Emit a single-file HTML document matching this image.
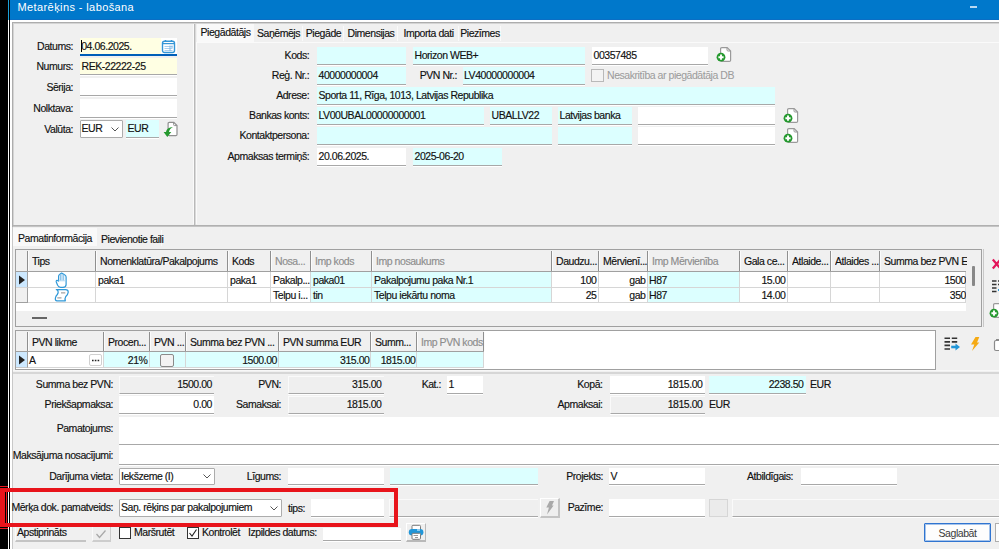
<!DOCTYPE html><html><head><meta charset="utf-8"><style>
html,body{margin:0;padding:0}
body{width:999px;height:549px;overflow:hidden;position:relative;background:#f0f0f0;font-family:"Liberation Sans",sans-serif}
.a{position:absolute}
.t{position:absolute;font-size:10.5px;line-height:12px;letter-spacing:-0.45px;white-space:nowrap;color:#111;-webkit-text-stroke:0.15px}
svg{overflow:visible}
</style></head><body>
<div class="a" style="left:0px;top:0px;width:8px;height:549px;background:#000"></div>
<div class="a" style="left:8px;top:0px;width:1px;height:20px;background:#1aa0d8"></div>
<div class="a" style="left:8px;top:20px;width:1px;height:529px;background:#fff"></div>
<div class="a" style="left:9px;top:0px;width:1px;height:549px;background:#000"></div>
<div class="a" style="left:10px;top:0px;width:989px;height:20px;background:#0078cb"></div>
<div class="t" style="left:17.5px;top:1.13px;font-size:11px;color:#fff;letter-spacing:0.4px;-webkit-text-stroke:0">Metarēķins - labošana</div>
<div class="a" style="left:970px;top:6px;width:7px;height:2px;background:#b9d9f2"></div>
<div class="a" style="left:10px;top:19px;width:989px;height:1px;background:#0a6ec4"></div>
<div class="a" style="left:10px;top:20px;width:989px;height:2px;background:#fff"></div>
<div class="a" style="left:10px;top:22px;width:2px;height:527px;background:#fff"></div>
<div class="a" style="left:12px;top:22px;width:987px;height:1px;background:#adadad"></div>
<div class="a" style="left:12px;top:22px;width:1px;height:205px;background:#adadad"></div>
<div class="a" style="left:13px;top:23px;width:986px;height:1px;background:#d4d4d4"></div>
<div class="a" style="left:13px;top:23px;width:1px;height:202px;background:#d4d4d4"></div>
<div class="a" style="left:12px;top:227px;width:1px;height:322px;background:#c8c8c8"></div>
<div class="a" style="left:193px;top:24px;width:1px;height:200px;background:#fafafa"></div>
<div class="a" style="left:194px;top:24px;width:1px;height:202px;background:#b9b9b9"></div>
<div class="a" style="left:195px;top:24px;width:1px;height:202px;background:#dadada"></div>
<div class="t" style="right:926px;top:40.33px;">Datums:</div>
<div class="t" style="right:926px;top:60.13px;">Numurs:</div>
<div class="t" style="right:926px;top:81.13px;">Sērija:</div>
<div class="t" style="right:926px;top:101.93px;">Nolktava:</div>
<div class="t" style="right:926px;top:122.93px;">Valūta:</div>
<div class="a" style="left:80px;top:38px;width:97px;height:18px;background:#ffffe3;border-bottom:2px solid #005fb8;box-sizing:border-box"></div>
<div class="a" style="left:161px;top:38px;width:16px;height:16px;background:#fff"></div>
<div class="t" style="left:81.2px;top:40.33px;">04.06.2025.</div>
<div class="a" style="left:81px;top:40px;width:1px;height:12px;background:#000"></div>
<svg class="a" style="left:161px;top:39px" width="15" height="15" viewBox="0 0 15 15">
<rect x="1.5" y="2.2" width="12" height="11.3" rx="2" fill="#fff" stroke="#3596d6" stroke-width="1.4"/>
<path d="M1.8 4.6 H13.2" stroke="#3596d6" stroke-width="1.2"/>
<path d="M4.5 1 V2.6 M10.5 1 V2.6" stroke="#3596d6" stroke-width="1.4"/>
<path d="M3.5 7.5 H11.5 M3.5 9.5 H11.5 M3.5 11.5 H11.5" stroke="#a9cfee" stroke-width="1.1"/>
<path d="M9 6.5 V12 M11 6.5 V9" stroke="#7fb8e6" stroke-width="1"/>
</svg>
<div class="a" style="left:80px;top:58px;width:97px;height:17px;background:#ffffe3;border-bottom:1px solid #a8a8a8;box-sizing:border-box;box-shadow:0 1px 0 #fff;"></div>
<div class="t" style="left:81.5px;top:60.13px;">REK-22222-25</div>
<div class="a" style="left:80px;top:78px;width:97px;height:17.5px;background:#fff;border-bottom:1px solid #a8a8a8;box-sizing:border-box;box-shadow:0 1px 0 #fff;"></div>
<div class="a" style="left:80px;top:99px;width:97px;height:19px;background:#fff;border-bottom:1px solid #a8a8a8;box-sizing:border-box;box-shadow:0 1px 0 #fff;"></div>
<div class="a" style="left:79.5px;top:119.5px;width:43.0px;height:18.0px;background:#fff;border:1px solid #acacac;box-sizing:border-box;border-radius:1px"></div>
<div class="t" style="left:81.5px;top:122.03px;">EUR</div>
<svg class="a" style="left:109.5px;top:124.5px" width="10" height="8"><path d="M1.5 2.5 L5 6 L8.5 2.5" fill="none" stroke="#555" stroke-width="1"/></svg>
<div class="a" style="left:126px;top:120px;width:33px;height:18px;background:#dcffff;border-bottom:1px solid #a8a8a8;box-sizing:border-box;box-shadow:0 1px 0 #fff;"></div>
<div class="t" style="left:127.5px;top:122.03px;">EUR</div>
<svg class="a" style="left:163px;top:121px" width="16" height="17" viewBox="0 0 16 17">
<path d="M6.3 1.4 H10.8 L14 4.6 V13.4 Q14 14.6 12.8 14.6 H6.3 Q5.1 14.6 5.1 13.4 V2.6 Q5.1 1.4 6.3 1.4 Z" fill="#fff" stroke="#8f8f8f" stroke-width="1.2"/>
<path d="M10.6 1.6 V3.6 Q10.6 4.6 11.6 4.6 H13.8" fill="none" stroke="#8f8f8f" stroke-width="1"/>
<path d="M10 6 Q6.5 7.5 6 11 H8.3 L4.3 16 L0.6 11 H3 Q3.5 6.5 10 6 Z" fill="#25992f"/></svg>
<div class="a" style="left:196px;top:24px;width:803px;height:18px;background:#f0f0f0"></div>
<div class="a" style="left:197px;top:24px;width:57px;height:19px;background:#f9f9f9"></div>
<div class="a" style="left:254px;top:26px;width:49px;height:15px;background:#f0f0f0;border-right:1px solid #fafafa;box-sizing:border-box"></div>
<div class="t" style="left:178.5px;width:200px;text-align:center;top:26.53px;">Saņēmējs</div>
<div class="a" style="left:303px;top:26px;width:41px;height:15px;background:#f0f0f0;border-right:1px solid #fafafa;box-sizing:border-box"></div>
<div class="t" style="left:223.5px;width:200px;text-align:center;top:26.53px;">Piegāde</div>
<div class="a" style="left:344px;top:26px;width:54px;height:15px;background:#f0f0f0;border-right:1px solid #fafafa;box-sizing:border-box"></div>
<div class="t" style="left:271.0px;width:200px;text-align:center;top:26.53px;">Dimensijas</div>
<div class="a" style="left:398px;top:26px;width:61px;height:15px;background:#f0f0f0;border-right:1px solid #fafafa;box-sizing:border-box"></div>
<div class="t" style="left:328.5px;width:200px;text-align:center;top:26.53px;">Importa dati</div>
<div class="a" style="left:459px;top:26px;width:42px;height:15px;background:#f0f0f0;border-right:1px solid #fafafa;box-sizing:border-box"></div>
<div class="t" style="left:380.0px;width:200px;text-align:center;top:26.53px;">Piezīmes</div>
<div class="t" style="left:125.5px;width:200px;text-align:center;top:26.03px;">Piegādātājs</div>
<div class="a" style="left:196px;top:42px;width:803px;height:182px;background:#f0f0f0;border-top:1px solid #fafafa;border-left:1px solid #fafafa;box-sizing:border-box"></div>
<div class="t" style="right:689.8px;top:49.03px;">Kods:</div>
<div class="t" style="right:689.8px;top:69.03px;">Reģ. Nr.:</div>
<div class="t" style="right:689.8px;top:89.03px;">Adrese:</div>
<div class="t" style="right:689.8px;top:109.03px;">Bankas konts:</div>
<div class="t" style="right:689.8px;top:129.03px;">Kontaktpersona:</div>
<div class="t" style="right:689.8px;top:149.53px;">Apmaksas termiņš:</div>
<div class="a" style="left:317px;top:47px;width:88.5px;height:18px;background:#dcffff;border-bottom:1px solid #a8a8a8;box-sizing:border-box;box-shadow:0 1px 0 #fff;"></div>
<div class="a" style="left:413px;top:47px;width:172px;height:18px;background:#dcffff;border-bottom:1px solid #a8a8a8;box-sizing:border-box;box-shadow:0 1px 0 #fff;"></div>
<div class="t" style="left:414.5px;top:49.03px;">Horizon WEB+</div>
<div class="a" style="left:592px;top:47px;width:115.5px;height:18px;background:#fff;border-bottom:1px solid #a8a8a8;box-sizing:border-box;box-shadow:0 1px 0 #fff;"></div>
<div class="t" style="left:593.5px;top:49.03px;">00357485</div>
<svg class="a" style="left:716px;top:46px" width="16" height="17" viewBox="0 0 16 17">
<path d="M5.8 1.6 H11.2 L14.6 5 V14.2 Q14.6 15.4 13.4 15.4 H5.8 Q4.6 15.4 4.6 14.2 V2.8 Q4.6 1.6 5.8 1.6 Z" fill="#fff" stroke="#9a9a9a" stroke-width="1.2"/>
<path d="M11 1.8 V4 Q11 5 12 5 H14.4" fill="none" stroke="#9a9a9a" stroke-width="1"/>
<circle cx="5" cy="11.2" r="4.4" fill="#25992f"/>
<path d="M5 8.6 V13.8 M2.4 11.2 H7.6" stroke="#fff" stroke-width="1.9"/></svg>
<div class="a" style="left:317px;top:67px;width:88.5px;height:18px;background:#dcffff;border-bottom:1px solid #a8a8a8;box-sizing:border-box;box-shadow:0 1px 0 #fff;"></div>
<div class="t" style="left:318.5px;top:69.03px;">40000000004</div>
<div class="t" style="right:542px;top:69.03px;">PVN Nr.:</div>
<div class="a" style="left:462.5px;top:67px;width:122.5px;height:18px;background:#dcffff;border-bottom:1px solid #a8a8a8;box-sizing:border-box;box-shadow:0 1px 0 #fff;"></div>
<div class="t" style="left:464.0px;top:69.03px;">LV40000000004</div>
<div class="a" style="left:591px;top:69px;width:13px;height:13px;background:#f3f3f3;border:1px solid #b9b9b9;box-sizing:border-box"></div>
<div class="t" style="left:607px;top:69.03px;color:#9c9c9c;-webkit-text-stroke:0.05px">Nesakritība ar piegādātāja DB</div>
<div class="a" style="left:317px;top:87px;width:458px;height:18px;background:#dcffff;border-bottom:1px solid #a8a8a8;box-sizing:border-box;box-shadow:0 1px 0 #fff;"></div>
<div class="t" style="left:318.5px;top:89.03px;">Sporta 11, Rīga, 1013, Latvijas Republika</div>
<div class="a" style="left:317px;top:107px;width:166.5px;height:18px;background:#dcffff;border-bottom:1px solid #a8a8a8;box-sizing:border-box;box-shadow:0 1px 0 #fff;"></div>
<div class="t" style="left:318.5px;top:109.03px;">LV00UBAL00000000001</div>
<div class="a" style="left:490px;top:107px;width:62px;height:18px;background:#dcffff;border-bottom:1px solid #a8a8a8;box-sizing:border-box;box-shadow:0 1px 0 #fff;"></div>
<div class="t" style="left:491.5px;top:109.03px;">UBALLV22</div>
<div class="a" style="left:558px;top:107px;width:74px;height:18px;background:#dcffff;border-bottom:1px solid #a8a8a8;box-sizing:border-box;box-shadow:0 1px 0 #fff;"></div>
<div class="t" style="left:559.5px;top:109.03px;">Latvijas banka</div>
<div class="a" style="left:638px;top:107px;width:137px;height:18px;background:#fff;border-bottom:1px solid #a8a8a8;box-sizing:border-box;box-shadow:0 1px 0 #fff;"></div>
<svg class="a" style="left:783px;top:107px" width="16" height="17" viewBox="0 0 16 17">
<path d="M5.8 1.6 H11.2 L14.6 5 V14.2 Q14.6 15.4 13.4 15.4 H5.8 Q4.6 15.4 4.6 14.2 V2.8 Q4.6 1.6 5.8 1.6 Z" fill="#fff" stroke="#9a9a9a" stroke-width="1.2"/>
<path d="M11 1.8 V4 Q11 5 12 5 H14.4" fill="none" stroke="#9a9a9a" stroke-width="1"/>
<circle cx="5" cy="11.2" r="4.4" fill="#25992f"/>
<path d="M5 8.6 V13.8 M2.4 11.2 H7.6" stroke="#fff" stroke-width="1.9"/></svg>
<div class="a" style="left:317px;top:127px;width:235px;height:18px;background:#dcffff;border-bottom:1px solid #a8a8a8;box-sizing:border-box;box-shadow:0 1px 0 #fff;"></div>
<div class="a" style="left:558px;top:127px;width:74px;height:18px;background:#dcffff;border-bottom:1px solid #a8a8a8;box-sizing:border-box;box-shadow:0 1px 0 #fff;"></div>
<div class="a" style="left:638px;top:127px;width:137px;height:18px;background:#fff;border-bottom:1px solid #a8a8a8;box-sizing:border-box;box-shadow:0 1px 0 #fff;"></div>
<svg class="a" style="left:783px;top:127px" width="16" height="17" viewBox="0 0 16 17">
<path d="M5.8 1.6 H11.2 L14.6 5 V14.2 Q14.6 15.4 13.4 15.4 H5.8 Q4.6 15.4 4.6 14.2 V2.8 Q4.6 1.6 5.8 1.6 Z" fill="#fff" stroke="#9a9a9a" stroke-width="1.2"/>
<path d="M11 1.8 V4 Q11 5 12 5 H14.4" fill="none" stroke="#9a9a9a" stroke-width="1"/>
<circle cx="5" cy="11.2" r="4.4" fill="#25992f"/>
<path d="M5 8.6 V13.8 M2.4 11.2 H7.6" stroke="#fff" stroke-width="1.9"/></svg>
<div class="a" style="left:317px;top:147.5px;width:88.5px;height:18.0px;background:#fff;border-bottom:1px solid #a8a8a8;box-sizing:border-box;box-shadow:0 1px 0 #fff;"></div>
<div class="t" style="left:318.5px;top:149.53px;">20.06.2025.</div>
<div class="a" style="left:413px;top:147.5px;width:89px;height:18.0px;background:#dcffff;border-bottom:1px solid #a8a8a8;box-sizing:border-box;box-shadow:0 1px 0 #fff;"></div>
<div class="t" style="left:414.5px;top:149.53px;">2025-06-20</div>
<div class="a" style="left:13px;top:225px;width:986px;height:1px;background:#b0b0b0"></div>
<div class="a" style="left:13px;top:226px;width:986px;height:1px;background:#c4c4c4"></div>
<div class="a" style="left:13px;top:228px;width:84px;height:18px;background:#f9f9f9"></div>
<div class="t" style="left:18px;top:231.53px;">Pamatinformācija</div>
<div class="a" style="left:97px;top:230px;width:65px;height:16px;background:#f0f0f0;border-right:1px solid #fafafa;box-sizing:border-box"></div>
<div class="t" style="left:101px;top:232.53px;">Pievienotie faili</div>
<div class="a" style="left:15px;top:249px;width:967px;height:78px;background:#f0f0f0;border:1px solid #a0a0a0;box-sizing:border-box"></div>
<div class="a" style="left:16px;top:250px;width:950px;height:61px;background:#fff"></div>
<div class="a" style="left:16px;top:250px;width:950px;height:22px;background:#f0f0f0;border-bottom:1px solid #a0a0a0;box-sizing:border-box"></div>
<div class="a" style="left:27px;top:251px;width:1px;height:20px;background:#8f8f8f"></div>
<div class="a" style="left:28px;top:251px;width:1px;height:20px;background:#fbfbfb"></div>
<div class="a" style="left:95px;top:251px;width:1px;height:20px;background:#8f8f8f"></div>
<div class="a" style="left:96px;top:251px;width:1px;height:20px;background:#fbfbfb"></div>
<div class="t" style="left:32px;top:255.03px;width:64px;overflow:hidden">Tips</div>
<div class="a" style="left:227px;top:251px;width:1px;height:20px;background:#8f8f8f"></div>
<div class="a" style="left:228px;top:251px;width:1px;height:20px;background:#fbfbfb"></div>
<div class="t" style="left:100px;top:255.03px;width:128px;overflow:hidden">Nomenklatūra/Pakalpojums</div>
<div class="a" style="left:270px;top:251px;width:1px;height:20px;background:#8f8f8f"></div>
<div class="a" style="left:271px;top:251px;width:1px;height:20px;background:#fbfbfb"></div>
<div class="t" style="left:232px;top:255.03px;width:39px;overflow:hidden">Kods</div>
<div class="a" style="left:310px;top:251px;width:1px;height:20px;background:#8f8f8f"></div>
<div class="a" style="left:311px;top:251px;width:1px;height:20px;background:#fbfbfb"></div>
<div class="t" style="left:275px;top:255.03px;color:#8d8d8d;width:36px;overflow:hidden">Nosa...</div>
<div class="a" style="left:371px;top:251px;width:1px;height:20px;background:#8f8f8f"></div>
<div class="a" style="left:372px;top:251px;width:1px;height:20px;background:#fbfbfb"></div>
<div class="t" style="left:315px;top:255.03px;color:#8d8d8d;width:57px;overflow:hidden">Imp kods</div>
<div class="a" style="left:551px;top:251px;width:1px;height:20px;background:#8f8f8f"></div>
<div class="a" style="left:552px;top:251px;width:1px;height:20px;background:#fbfbfb"></div>
<div class="t" style="left:376px;top:255.03px;color:#8d8d8d;width:176px;overflow:hidden">Imp nosaukums</div>
<div class="a" style="left:598px;top:251px;width:1px;height:20px;background:#8f8f8f"></div>
<div class="a" style="left:599px;top:251px;width:1px;height:20px;background:#fbfbfb"></div>
<div class="t" style="left:556px;top:255.03px;width:43px;overflow:hidden">Daudzu...</div>
<div class="a" style="left:647px;top:251px;width:1px;height:20px;background:#8f8f8f"></div>
<div class="a" style="left:648px;top:251px;width:1px;height:20px;background:#fbfbfb"></div>
<div class="t" style="left:603px;top:255.03px;width:45px;overflow:hidden">Mērvienī...</div>
<div class="a" style="left:739px;top:251px;width:1px;height:20px;background:#8f8f8f"></div>
<div class="a" style="left:740px;top:251px;width:1px;height:20px;background:#fbfbfb"></div>
<div class="t" style="left:652px;top:255.03px;color:#8d8d8d;width:88px;overflow:hidden">Imp Mērvienība</div>
<div class="a" style="left:787px;top:251px;width:1px;height:20px;background:#8f8f8f"></div>
<div class="a" style="left:788px;top:251px;width:1px;height:20px;background:#fbfbfb"></div>
<div class="t" style="left:744px;top:255.03px;width:44px;overflow:hidden">Gala ce...</div>
<div class="a" style="left:830px;top:251px;width:1px;height:20px;background:#8f8f8f"></div>
<div class="a" style="left:831px;top:251px;width:1px;height:20px;background:#fbfbfb"></div>
<div class="t" style="left:792px;top:255.03px;width:39px;overflow:hidden">Atlaide...</div>
<div class="a" style="left:879px;top:251px;width:1px;height:20px;background:#8f8f8f"></div>
<div class="a" style="left:880px;top:251px;width:1px;height:20px;background:#fbfbfb"></div>
<div class="t" style="left:835px;top:255.03px;width:45px;overflow:hidden">Atlaides ...</div>
<div class="t" style="left:884px;top:255.03px;width:83px;overflow:hidden">Summa bez PVN EUR</div>
<div class="a" style="left:28px;top:272px;width:68px;height:16px;background:#fff;border-right:1px solid #d6d6d6;border-bottom:1px solid #d6d6d6;box-sizing:border-box"></div>
<div class="a" style="left:96px;top:272px;width:132px;height:16px;background:#fff;border-right:1px solid #d6d6d6;border-bottom:1px solid #d6d6d6;box-sizing:border-box"></div>
<div class="a" style="left:228px;top:272px;width:43px;height:16px;background:#fff;border-right:1px solid #d6d6d6;border-bottom:1px solid #d6d6d6;box-sizing:border-box"></div>
<div class="a" style="left:271px;top:272px;width:40px;height:16px;background:#fff;border-right:1px solid #d6d6d6;border-bottom:1px solid #d6d6d6;box-sizing:border-box"></div>
<div class="a" style="left:311px;top:272px;width:61px;height:16px;background:#dcffff;border-right:1px solid #d6d6d6;border-bottom:1px solid #d6d6d6;box-sizing:border-box"></div>
<div class="a" style="left:372px;top:272px;width:180px;height:16px;background:#dcffff;border-right:1px solid #d6d6d6;border-bottom:1px solid #d6d6d6;box-sizing:border-box"></div>
<div class="a" style="left:552px;top:272px;width:47px;height:16px;background:#fff;border-right:1px solid #d6d6d6;border-bottom:1px solid #d6d6d6;box-sizing:border-box"></div>
<div class="a" style="left:599px;top:272px;width:49px;height:16px;background:#fff;border-right:1px solid #d6d6d6;border-bottom:1px solid #d6d6d6;box-sizing:border-box"></div>
<div class="a" style="left:648px;top:272px;width:92px;height:16px;background:#dcffff;border-right:1px solid #d6d6d6;border-bottom:1px solid #d6d6d6;box-sizing:border-box"></div>
<div class="a" style="left:740px;top:272px;width:48px;height:16px;background:#fff;border-right:1px solid #d6d6d6;border-bottom:1px solid #d6d6d6;box-sizing:border-box"></div>
<div class="a" style="left:788px;top:272px;width:43px;height:16px;background:#fff;border-right:1px solid #d6d6d6;border-bottom:1px solid #d6d6d6;box-sizing:border-box"></div>
<div class="a" style="left:831px;top:272px;width:49px;height:16px;background:#fff;border-right:1px solid #d6d6d6;border-bottom:1px solid #d6d6d6;box-sizing:border-box"></div>
<div class="a" style="left:880px;top:272px;width:86px;height:16px;background:#fff;border-right:1px solid #d6d6d6;border-bottom:1px solid #d6d6d6;box-sizing:border-box"></div>
<div class="a" style="left:28px;top:288px;width:68px;height:15px;background:#fff;border-right:1px solid #d6d6d6;border-bottom:1px solid #d6d6d6;box-sizing:border-box"></div>
<div class="a" style="left:96px;top:288px;width:132px;height:15px;background:#fff;border-right:1px solid #d6d6d6;border-bottom:1px solid #d6d6d6;box-sizing:border-box"></div>
<div class="a" style="left:228px;top:288px;width:43px;height:15px;background:#fff;border-right:1px solid #d6d6d6;border-bottom:1px solid #d6d6d6;box-sizing:border-box"></div>
<div class="a" style="left:271px;top:288px;width:40px;height:15px;background:#fff;border-right:1px solid #d6d6d6;border-bottom:1px solid #d6d6d6;box-sizing:border-box"></div>
<div class="a" style="left:311px;top:288px;width:61px;height:15px;background:#dcffff;border-right:1px solid #d6d6d6;border-bottom:1px solid #d6d6d6;box-sizing:border-box"></div>
<div class="a" style="left:372px;top:288px;width:180px;height:15px;background:#dcffff;border-right:1px solid #d6d6d6;border-bottom:1px solid #d6d6d6;box-sizing:border-box"></div>
<div class="a" style="left:552px;top:288px;width:47px;height:15px;background:#fff;border-right:1px solid #d6d6d6;border-bottom:1px solid #d6d6d6;box-sizing:border-box"></div>
<div class="a" style="left:599px;top:288px;width:49px;height:15px;background:#fff;border-right:1px solid #d6d6d6;border-bottom:1px solid #d6d6d6;box-sizing:border-box"></div>
<div class="a" style="left:648px;top:288px;width:92px;height:15px;background:#dcffff;border-right:1px solid #d6d6d6;border-bottom:1px solid #d6d6d6;box-sizing:border-box"></div>
<div class="a" style="left:740px;top:288px;width:48px;height:15px;background:#fff;border-right:1px solid #d6d6d6;border-bottom:1px solid #d6d6d6;box-sizing:border-box"></div>
<div class="a" style="left:788px;top:288px;width:43px;height:15px;background:#fff;border-right:1px solid #d6d6d6;border-bottom:1px solid #d6d6d6;box-sizing:border-box"></div>
<div class="a" style="left:831px;top:288px;width:49px;height:15px;background:#fff;border-right:1px solid #d6d6d6;border-bottom:1px solid #d6d6d6;box-sizing:border-box"></div>
<div class="a" style="left:880px;top:288px;width:86px;height:15px;background:#fff;border-right:1px solid #d6d6d6;border-bottom:1px solid #d6d6d6;box-sizing:border-box"></div>
<div class="a" style="left:16px;top:272px;width:12px;height:16px;background:#cce8ff;border-right:1px solid #a0a0a0;border-bottom:1px solid #d6d6d6;box-sizing:border-box"></div>
<div class="a" style="left:16px;top:288px;width:12px;height:15px;background:#f0f0f0;border-right:1px solid #a0a0a0;border-bottom:1px solid #a0a0a0;box-sizing:border-box"></div>
<svg class="a" style="left:18px;top:275px" width="8" height="10"><path d="M1 0.5 L7 5 L1 9.5 Z" fill="#222"/></svg>
<div class="t" style="left:98px;top:273.53px;">paka1</div>
<div class="t" style="left:230px;top:273.53px;">paka1</div>
<div class="t" style="left:273px;top:273.53px;">Pakalp...</div>
<div class="t" style="left:313px;top:273.53px;">paka01</div>
<div class="t" style="left:374px;top:273.53px;">Pakalpojumu paka Nr.1</div>
<div class="t" style="right:402.5px;top:273.53px;">100</div>
<div class="t" style="right:353.5px;top:273.53px;">gab</div>
<div class="t" style="left:649px;top:273.53px;">H87</div>
<div class="t" style="right:213.5px;top:273.53px;">15.00</div>
<div class="t" style="right:33px;top:273.53px;width:40px;text-align:right;overflow:hidden">1500</div>
<div class="t" style="left:273px;top:289.03px;">Telpu i...</div>
<div class="t" style="left:313px;top:289.03px;">tin</div>
<div class="t" style="left:374px;top:289.03px;">Telpu iekārtu noma</div>
<div class="t" style="right:402.5px;top:289.03px;">25</div>
<div class="t" style="right:353.5px;top:289.03px;">gab</div>
<div class="t" style="left:649px;top:289.03px;">H87</div>
<div class="t" style="right:213.5px;top:289.03px;">14.00</div>
<div class="t" style="right:33px;top:289.03px;width:40px;text-align:right;overflow:hidden">350</div>
<svg class="a" style="left:52px;top:270.5px" width="18" height="18" viewBox="0 0 18 18">
<path d="M6.6 10 V5.2 Q6.6 4.2 7.6 3.6 L9.6 2.1 L12.6 3.8 Q14.1 4.6 14.1 6 V13.5 Q14.1 16.3 11 16.3 H8.6 Q6.6 16.3 5.6 14.3 L4.3 11 Q3.9 9.6 5 9.3 Q6 9.1 6.6 10.6" fill="#fff" stroke="#2f98d8" stroke-width="1.2" stroke-linejoin="round"/>
<path d="M8.4 4 V9.6 M10 3 V9.6 M11.7 4 V9.6" stroke="#6fb6e6" stroke-width="0.9"/>
<path d="M6.6 9.8 H13.6" stroke="#a8d2f0" stroke-width="0.8"/>
</svg>
<svg class="a" style="left:52px;top:286px" width="20" height="18" viewBox="0 0 20 18">
<path d="M4.3 3.6 H13.5 Q16.3 3.6 16.2 6.3 Q16 8.5 13.8 10.5 Q12.6 12.5 13.3 14.8 H5 Q3 14.8 3.4 12 Q3.8 10 5.3 8.5 Q6.6 6.8 6 5 Q5.4 3.7 4.3 3.6 Z" fill="#fff" stroke="#2f98d8" stroke-width="1.25" stroke-linejoin="round"/>
<path d="M9 6.8 H13.3 M5.3 11.9 H9.5" stroke="#a3a3a3" stroke-width="1.2"/>
</svg>
<div class="a" style="left:32px;top:317px;width:15px;height:2px;background:#666"></div>
<div class="a" style="left:972px;top:266px;width:3px;height:20px;background:#888;border-radius:1px"></div>
<div class="a" style="left:983px;top:249px;width:16px;height:78px;background:#f0f0f0;border-left:1px solid #c8c8c8;box-sizing:border-box"></div>
<svg class="a" style="left:991px;top:258px" width="10" height="12"><path d="M1.8 1.5 L9.5 10.5 M9.5 1.5 L1.8 10.5" stroke="#e3165b" stroke-width="2.2"/></svg>
<svg class="a" style="left:992px;top:279px" width="10" height="16"><path d="M0 2 H4.5 M0 5.5 H4.5 M0 9 H4.5 M0 12.5 H4.5 M6 2 H10 M6 5.5 H10" stroke="#333" stroke-width="1.5"/><path d="M6 11 H10" stroke="#2a9ad6" stroke-width="2.2"/></svg>
<svg class="a" style="left:989px;top:301.5px" width="16" height="17" viewBox="0 0 16 17">
<path d="M5.8 1.6 H11.2 L14.6 5 V14.2 Q14.6 15.4 13.4 15.4 H5.8 Q4.6 15.4 4.6 14.2 V2.8 Q4.6 1.6 5.8 1.6 Z" fill="#fff" stroke="#9a9a9a" stroke-width="1.2"/>
<path d="M11 1.8 V4 Q11 5 12 5 H14.4" fill="none" stroke="#9a9a9a" stroke-width="1"/>
<circle cx="5" cy="11.2" r="4.4" fill="#25992f"/>
<path d="M5 8.6 V13.8 M2.4 11.2 H7.6" stroke="#fff" stroke-width="1.9"/></svg>
<div class="a" style="left:15px;top:330px;width:921px;height:40px;background:#fff;border:1px solid #a0a0a0;box-sizing:border-box"></div>
<div class="a" style="left:16px;top:331px;width:468px;height:21px;background:#f0f0f0;border-bottom:1px solid #a0a0a0;box-sizing:border-box"></div>
<div class="a" style="left:27px;top:332px;width:1px;height:19px;background:#8f8f8f"></div>
<div class="a" style="left:28px;top:332px;width:1px;height:19px;background:#fbfbfb"></div>
<div class="a" style="left:103px;top:332px;width:1px;height:19px;background:#8f8f8f"></div>
<div class="a" style="left:104px;top:332px;width:1px;height:19px;background:#fbfbfb"></div>
<div class="t" style="left:32px;top:336.33px;">PVN likme</div>
<div class="a" style="left:149px;top:332px;width:1px;height:19px;background:#8f8f8f"></div>
<div class="a" style="left:150px;top:332px;width:1px;height:19px;background:#fbfbfb"></div>
<div class="t" style="left:108px;top:336.33px;">Procen...</div>
<div class="a" style="left:185px;top:332px;width:1px;height:19px;background:#8f8f8f"></div>
<div class="a" style="left:186px;top:332px;width:1px;height:19px;background:#fbfbfb"></div>
<div class="t" style="left:154px;top:336.33px;">PVN ...</div>
<div class="a" style="left:278px;top:332px;width:1px;height:19px;background:#8f8f8f"></div>
<div class="a" style="left:279px;top:332px;width:1px;height:19px;background:#fbfbfb"></div>
<div class="t" style="left:190px;top:336.33px;">Summa bez PVN ...</div>
<div class="a" style="left:370px;top:332px;width:1px;height:19px;background:#8f8f8f"></div>
<div class="a" style="left:371px;top:332px;width:1px;height:19px;background:#fbfbfb"></div>
<div class="t" style="left:283px;top:336.33px;">PVN summa EUR</div>
<div class="a" style="left:416px;top:332px;width:1px;height:19px;background:#8f8f8f"></div>
<div class="a" style="left:417px;top:332px;width:1px;height:19px;background:#fbfbfb"></div>
<div class="t" style="left:375px;top:336.33px;">Summ...</div>
<div class="a" style="left:483px;top:332px;width:1px;height:19px;background:#8f8f8f"></div>
<div class="a" style="left:484px;top:332px;width:1px;height:19px;background:#fbfbfb"></div>
<div class="t" style="left:421px;top:336.33px;color:#8d8d8d">Imp PVN kods</div>
<div class="a" style="left:28px;top:352px;width:76px;height:16px;background:#fff;border-right:1px solid #d6d6d6;border-bottom:1px solid #d6d6d6;box-sizing:border-box"></div>
<div class="a" style="left:104px;top:352px;width:46px;height:16px;background:#dcffff;border-right:1px solid #d6d6d6;border-bottom:1px solid #d6d6d6;box-sizing:border-box"></div>
<div class="a" style="left:150px;top:352px;width:36px;height:16px;background:#dcffff;border-right:1px solid #d6d6d6;border-bottom:1px solid #d6d6d6;box-sizing:border-box"></div>
<div class="a" style="left:186px;top:352px;width:93px;height:16px;background:#dcffff;border-right:1px solid #d6d6d6;border-bottom:1px solid #d6d6d6;box-sizing:border-box"></div>
<div class="a" style="left:279px;top:352px;width:92px;height:16px;background:#dcffff;border-right:1px solid #d6d6d6;border-bottom:1px solid #d6d6d6;box-sizing:border-box"></div>
<div class="a" style="left:371px;top:352px;width:46px;height:16px;background:#dcffff;border-right:1px solid #d6d6d6;border-bottom:1px solid #d6d6d6;box-sizing:border-box"></div>
<div class="a" style="left:417px;top:352px;width:67px;height:16px;background:#dcffff;border-right:1px solid #d6d6d6;border-bottom:1px solid #d6d6d6;box-sizing:border-box"></div>
<div class="a" style="left:16px;top:352px;width:12px;height:16px;background:#cce8ff;border-right:1px solid #a0a0a0;border-bottom:1px solid #c8c8c8;box-sizing:border-box"></div>
<svg class="a" style="left:18px;top:355px" width="8" height="10"><path d="M1 0.5 L7 5 L1 9.5 Z" fill="#222"/></svg>
<div class="t" style="left:29px;top:353.73px;">A</div>
<div class="a" style="left:89px;top:354px;width:13px;height:12px;background:#fff;border:1px solid #d0d0d0;border-radius:2px;box-sizing:border-box"></div>
<svg class="a" style="left:89px;top:354px" width="13" height="12"><path d="M3 6.5 h1.6 M5.8 6.5 h1.6 M8.6 6.5 h1.6" stroke="#222" stroke-width="1.6"/></svg>
<div class="t" style="right:851.5px;top:354.03px;">21%</div>
<div class="a" style="left:160px;top:354px;width:14px;height:13px;background:#f3f3f3;border:1px solid #8a8a8a;border-radius:2px;box-sizing:border-box"></div>
<div class="t" style="right:722px;top:354.03px;">1500.00</div>
<div class="t" style="right:629.5px;top:354.03px;">315.00</div>
<div class="t" style="right:583.5px;top:354.03px;">1815.00</div>
<svg class="a" style="left:944px;top:337px" width="17" height="14" viewBox="0 0 17 14"><path d="M0.5 1.3 H6 M0.5 4.9 H6 M0.5 8.4 H6 M0.5 12 H6 M7.8 1.3 H13.2 M7.8 4.9 H13.2" stroke="#333" stroke-width="1.6"/><path d="M7.2 10 H12.5" stroke="#2196d8" stroke-width="2.6"/><path d="M11.5 6.6 L16 10 L11.5 13.4 Z" fill="#2196d8"/></svg>
<svg class="a" style="left:970px;top:336px" width="10" height="16" viewBox="0 0 10 16"><path d="M5.5 1 H9.3 L7 6.5 H9.3 L2 15 L4.3 8.6 H1 Z" fill="#f5aa14"/></svg>
<svg class="a" style="left:993px;top:338px" width="12" height="14"><path d="M3 1.5 H8 M1.5 4 Q1.5 2.5 3 2.5 H11 V12.5 H3 Q1.5 12.5 1.5 11 Z" fill="#fff" stroke="#8a8a8a" stroke-width="1.2"/></svg>
<div class="a" style="left:13px;top:370px;width:986px;height:1px;background:#f8f8f8"></div>
<div class="a" style="left:13px;top:372px;width:986px;height:2px;background:#d6d6d6"></div>
<div class="t" style="right:886px;top:378.03px;">Summa bez PVN:</div>
<div class="a" style="left:119px;top:376px;width:95px;height:17.5px;background:#efefef;border-top:1px solid #fafafa;border-left:1px solid #fafafa;border-bottom:1px solid #a8a8a8;box-sizing:border-box;box-shadow:0 1px 0 #fff;"></div>
<div class="t" style="right:787px;top:378.03px;">1500.00</div>
<div class="t" style="right:718px;top:378.03px;">PVN:</div>
<div class="a" style="left:288px;top:376px;width:95.5px;height:17.5px;background:#efefef;border-top:1px solid #fafafa;border-left:1px solid #fafafa;border-bottom:1px solid #a8a8a8;box-sizing:border-box;box-shadow:0 1px 0 #fff;"></div>
<div class="t" style="right:617.5px;top:378.03px;">315.00</div>
<div class="t" style="right:558px;top:378.03px;">Kat.:</div>
<div class="a" style="left:447px;top:376px;width:35.5px;height:17.5px;background:#fff;border-bottom:1px solid #a8a8a8;box-sizing:border-box;box-shadow:0 1px 0 #fff;"></div>
<div class="t" style="left:448.5px;top:378.03px;">1</div>
<div class="t" style="right:396.5px;top:378.03px;">Kopā:</div>
<div class="a" style="left:610px;top:376px;width:94.5px;height:17.5px;background:#fff;border-bottom:1px solid #a8a8a8;box-sizing:border-box;box-shadow:0 1px 0 #fff;"></div>
<div class="t" style="right:296.5px;top:378.03px;">1815.00</div>
<div class="a" style="left:709px;top:376px;width:96.5px;height:17.5px;background:#dcffff;border-bottom:1px solid #a8a8a8;box-sizing:border-box;box-shadow:0 1px 0 #fff;"></div>
<div class="t" style="right:195.5px;top:378.03px;">2238.50</div>
<div class="t" style="left:810px;top:378.03px;">EUR</div>
<div class="t" style="right:886px;top:398.03px;">Priekšapmaksa:</div>
<div class="a" style="left:119px;top:396px;width:95px;height:17.5px;background:#fff;border-bottom:1px solid #a8a8a8;box-sizing:border-box;box-shadow:0 1px 0 #fff;"></div>
<div class="t" style="right:787px;top:398.03px;">0.00</div>
<div class="t" style="right:718px;top:398.03px;">Samaksai:</div>
<div class="a" style="left:288px;top:396px;width:95.5px;height:17.5px;background:#efefef;border-top:1px solid #fafafa;border-left:1px solid #fafafa;border-bottom:1px solid #a8a8a8;box-sizing:border-box;box-shadow:0 1px 0 #fff;"></div>
<div class="t" style="right:617.5px;top:398.03px;">1815.00</div>
<div class="t" style="right:396.5px;top:398.03px;">Apmaksai:</div>
<div class="a" style="left:610px;top:396px;width:94.5px;height:17.5px;background:#efefef;border-top:1px solid #fafafa;border-left:1px solid #fafafa;border-bottom:1px solid #a8a8a8;box-sizing:border-box;box-shadow:0 1px 0 #fff;"></div>
<div class="t" style="right:296.5px;top:398.03px;">1815.00</div>
<div class="t" style="left:709px;top:398.03px;">EUR</div>
<div class="t" style="right:886px;top:421.83px;">Pamatojums:</div>
<div class="a" style="left:119px;top:417px;width:880px;height:28px;background:#fff;border-bottom:1px solid #a8a8a8;box-sizing:border-box;box-shadow:0 1px 0 #fff;"></div>
<div class="t" style="right:886px;top:449.13px;">Maksājuma nosacījumi:</div>
<div class="a" style="left:119px;top:446px;width:880px;height:19px;background:#fff;border-bottom:1px solid #a8a8a8;box-sizing:border-box;box-shadow:0 1px 0 #fff;"></div>
<div class="t" style="right:886px;top:469.53px;">Darījuma vieta:</div>
<div class="a" style="left:119px;top:467.5px;width:95.5px;height:17.0px;background:#fff;border:1px solid #acacac;box-sizing:border-box;border-radius:1px"></div>
<div class="t" style="left:121px;top:469.73px;">Iekšzeme (I)</div>
<svg class="a" style="left:201.5px;top:472.0px" width="10" height="8"><path d="M1.5 2.5 L5 6 L8.5 2.5" fill="none" stroke="#555" stroke-width="1"/></svg>
<div class="t" style="right:718px;top:469.53px;">Līgums:</div>
<div class="a" style="left:287.5px;top:467.5px;width:96.0px;height:17.0px;background:#fff;border-bottom:1px solid #a8a8a8;box-sizing:border-box;box-shadow:0 1px 0 #fff;"></div>
<div class="a" style="left:389.5px;top:467.5px;width:148.0px;height:17.0px;background:#dcffff;border-bottom:1px solid #a8a8a8;box-sizing:border-box;box-shadow:0 1px 0 #fff;"></div>
<div class="t" style="right:396px;top:469.53px;">Projekts:</div>
<div class="a" style="left:609px;top:467.5px;width:95.5px;height:17.0px;background:#fff;border-bottom:1px solid #a8a8a8;box-sizing:border-box;box-shadow:0 1px 0 #fff;"></div>
<div class="t" style="left:610.5px;top:469.53px;">V</div>
<div class="t" style="right:206px;top:469.53px;">Atbildīgais:</div>
<div class="a" style="left:801px;top:467.5px;width:95.5px;height:17.0px;background:#fff;border-bottom:1px solid #a8a8a8;box-sizing:border-box;box-shadow:0 1px 0 #fff;"></div>
<div class="t" style="right:886px;top:500.53px;">Mērķa dok. pamatveids:</div>
<div class="a" style="left:119px;top:498.5px;width:162.5px;height:18.0px;background:#fff;border:1px solid #acacac;box-sizing:border-box;border-radius:1px"></div>
<div class="t" style="left:121px;top:500.83px;">Saņ. rēķins par pakalpojumiem</div>
<svg class="a" style="left:268.5px;top:503.5px" width="10" height="8"><path d="M1.5 2.5 L5 6 L8.5 2.5" fill="none" stroke="#555" stroke-width="1"/></svg>
<div class="t" style="left:288px;top:501.53px;">tips:</div>
<div class="a" style="left:311px;top:498.5px;width:72.5px;height:18.0px;background:#fff;border-bottom:1px solid #a8a8a8;box-sizing:border-box;box-shadow:0 1px 0 #fff;"></div>
<div class="a" style="left:389px;top:498.5px;width:148.5px;height:18.0px;background:#efefef;border-top:1px solid #fafafa;border-left:1px solid #fafafa;border-bottom:1px solid #a8a8a8;box-sizing:border-box;box-shadow:0 1px 0 #fff;"></div>
<div class="a" style="left:540px;top:498px;width:20px;height:20px;background:#efefef;border-top:1px solid #fff;border-left:1px solid #fff;border-right:2px solid #c4c4c4;border-bottom:2px solid #c4c4c4;box-sizing:border-box"></div>
<svg class="a" style="left:545px;top:500px" width="10" height="15" viewBox="0 0 10 15"><path d="M4.6 1 H9 L7 5.6 H8.6 L2 14.5 L3.9 7.6 H1.3 Z" fill="#a9a9a9"/></svg>
<div class="t" style="right:396px;top:500.53px;">Pazīme:</div>
<div class="a" style="left:609px;top:498.5px;width:95.5px;height:18.0px;background:#fff;border-bottom:1px solid #a8a8a8;box-sizing:border-box;box-shadow:0 1px 0 #fff;"></div>
<div class="a" style="left:708.5px;top:498.5px;width:19.5px;height:18.0px;background:#ebebeb;border:1px solid #d6d6d6;box-sizing:border-box"></div>
<div class="a" style="left:732px;top:498.5px;width:267px;height:18.0px;background:#efefef;border-top:1px solid #fafafa;border-left:1px solid #fafafa;border-bottom:1px solid #a8a8a8;box-sizing:border-box;box-shadow:0 1px 0 #fff;"></div>
<div class="a" style="left:15px;top:526px;width:71px;height:16px;background:#f0f0f0;border-left:1px solid #fafafa;border-bottom:2px solid #c4c4c4;box-sizing:border-box"></div>
<div class="t" style="left:17px;top:525.53px;">Apstiprināts</div>
<div class="a" style="left:92px;top:526px;width:19px;height:16px;background:#eeeeee;border-left:1px solid #fafafa;border-top:1px solid #fafafa;border-right:1px solid #cdcdcd;border-bottom:2px solid #cdcdcd;box-sizing:border-box"></div>
<svg class="a" style="left:95px;top:528px" width="12" height="12"><path d="M1.5 6 L4.5 9.5 L10.5 2.5" fill="none" stroke="#a9a9a9" stroke-width="1.3"/></svg>
<div class="a" style="left:118.5px;top:526.5px;width:12.5px;height:12.5px;background:#fff;border:1px solid #333;box-sizing:border-box"></div>
<div class="t" style="left:134px;top:526.03px;">Maršrutēt</div>
<div class="a" style="left:186.5px;top:526.5px;width:12.5px;height:12.5px;background:#fff;border:1px solid #333;box-sizing:border-box"></div>
<svg class="a" style="left:188px;top:528px" width="10" height="10"><path d="M1.5 5 L4 8 L8.5 1.5" fill="none" stroke="#222" stroke-width="1.1"/></svg>
<div class="t" style="left:202px;top:526.03px;">Kontrolēt</div>
<div class="t" style="left:248px;top:526.03px;">Izpildes datums:</div>
<div class="a" style="left:323px;top:528px;width:77.5px;height:13px;background:#fff;border-bottom:1px solid #a8a8a8;box-sizing:border-box;box-shadow:0 1px 0 #fff;"></div>
<div class="a" style="left:406px;top:523px;width:20px;height:19px;background:#efefef;border-top:1px solid #fff;border-left:1px solid #fff;border-right:1px solid #b9b9b9;border-bottom:2px solid #b9b9b9;box-sizing:border-box"></div>
<svg class="a" style="left:408px;top:524px" width="16" height="17" viewBox="0 0 16 17"><rect x="4" y="1.3" width="8.5" height="5" rx="1" fill="#fff" stroke="#7a7a7a" stroke-width="1"/><rect x="0.8" y="5" width="14.6" height="6.4" rx="3.2" fill="#2196d8"/><rect x="9" y="5" width="3" height="2" fill="#8ccaf0"/><rect x="4" y="9.3" width="8.5" height="6" rx="1" fill="#fff" stroke="#7a7a7a" stroke-width="1"/><path d="M5.5 11.5 H10 M7 13.5 H10" stroke="#999" stroke-width="1"/></svg>
<div class="a" style="left:924px;top:523px;width:67px;height:19px;background:#fdfdfd;border:1px solid #2f74d0;border-radius:1px;box-shadow:inset 0 0 0 1px rgba(60,127,212,0.45);box-sizing:border-box"></div>
<div class="t" style="left:857.5px;width:200px;text-align:center;top:526.53px;color:#3a3a3a;-webkit-text-stroke:0">Saglabāt</div>
<div class="a" style="left:995px;top:523px;width:15px;height:19px;background:#fdfdfd;border:1px solid #adadad;box-sizing:border-box"></div>
<div class="a" style="left:0px;top:488px;width:398px;height:38.5px;border:4px solid #e8141b;border-left-width:5px;box-sizing:border-box"></div>
<div class="a" style="left:5.5px;top:489px;width:1.0px;height:37px;background:#e8141b"></div>
<div class="a" style="left:0px;top:486px;width:8px;height:1px;background:#e8141b"></div>
<div class="a" style="left:0px;top:528px;width:8px;height:1px;background:#e8141b"></div>
</body></html>
